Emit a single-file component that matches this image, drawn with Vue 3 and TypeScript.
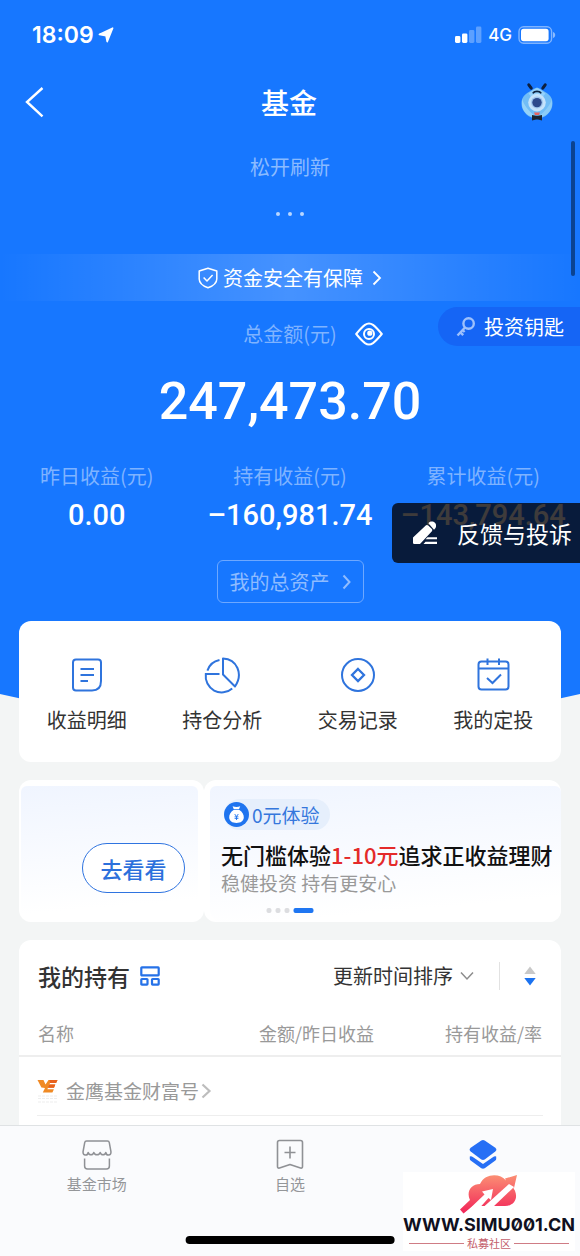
<script setup lang="ts">
import { ref } from 'vue'

interface Stat {
  label: string
  value: string
}

interface Shortcut {
  icon: 'detail' | 'pie' | 'record' | 'plan'
  label: string
}

const stats: Stat[] = [
  { label: '昨日收益(元)', value: '0.00' },
  { label: '持有收益(元)', value: '–160,981.74' },
  { label: '累计收益(元)', value: '–143,794.64' },
]

const shortcuts: Shortcut[] = [
  { icon: 'detail', label: '收益明细' },
  { icon: 'pie', label: '持仓分析' },
  { icon: 'record', label: '交易记录' },
  { icon: 'plan', label: '我的定投' },
]

const sortBy = ref('time')
</script>

<template>
  <div class="page">
    <section class="hero">
      <div class="status">
        <div class="status-left">
          <span class="clock">18:09</span>
          <svg width="16" height="18" viewBox="0 0 16 18"><path d="M14.600 2.200 9.200 15.600 8 9.600 1.400 8.400Z" fill="#fff" stroke="#fff" stroke-width="1.600" stroke-linejoin="round" /></svg>
        </div>
        <div class="status-right">
          <svg width="27" height="18" viewBox="0 0 27 18" fill="#fff">
            <rect x="0" y="10" width="5.4" height="7" rx="1.4" />
            <rect x="7" y="7.4" width="5.4" height="9.6" rx="1.4" />
            <rect x="14" y="4" width="5.4" height="13" rx="1.4" opacity=".3" />
            <rect x="21" y="0.6" width="5.4" height="16.4" rx="1.4" opacity=".3" />
          </svg>
          <span class="network">4G</span>
          <svg width="38" height="18" viewBox="0 0 38 18">
            <rect x="1" y=".8" width="32.6" height="16.4" rx="4.6" fill="none" stroke="#fff" stroke-opacity=".45" stroke-width="1.4" />
            <rect x="3" y="2.8" width="27.6" height="12.4" rx="2.6" fill="#fff" />
            <path d="M35 6v6c1.600-.5 2.200-1.600 2.200-3S36.600 6.500 35 6Z" fill="#fff" opacity=".5" />
          </svg>
        </div>
      </div>

      <header class="nav">
        <button class="icon-button" type="button" aria-label="返回">
          <svg width="20" height="34" viewBox="0 0 20 34" fill="none" stroke="#fff" stroke-width="2.4"><path d="M18.500 3 3 17l15.500 14.400" /></svg>
        </button>
        <h1>基金</h1>
        <button class="icon-button end" type="button" aria-label="客服">
          <svg width="34" height="40" viewBox="0 0 34 40">
            <path d="M17 5.500c3.400 1.200 6.400 3.400 9.800 5.600 3.400 2.200 5.800 5.600 5.700 10.400C32.400 29.500 25.500 36.600 17 36.600S1.500 29.500 1.500 21.500c0-4.800 2.300-8.200 5.700-10.400C10.600 8.900 13.600 6.700 17 5.500Z" fill="#71bdf6" />
            <path d="M17 6c3 1 5.800 3.600 8.500 5.500L17 21 8.500 11.500C11.200 9.600 14 7 17 6Z" fill="#93d1fb" />
            <path d="M2 17c2 6 6 12 15 18.500-8 0-14-5-15-12Z" fill="#a5dbfa" opacity=".7" />
            <path d="M32 17c-2 6-6 12-15 18.500 8 0 14-5 15-12Z" fill="#a5dbfa" opacity=".5" />
            <circle cx="17" cy="20.600" r="8.800" fill="#c5e3fb" />
            <circle cx="17" cy="20.600" r="6" fill="#9fc6ee" />
            <circle cx="17" cy="20.600" r="4.700" fill="#2d4a8c" />
            <path d="M13.300 10.800c1.200-2 6.200-2 7.400 0" fill="none" stroke="#0d2340" stroke-width="1.800" stroke-linecap="round" />
            <path d="M8.800 2.800l2.400 3.400M25.200 2.800l-2.400 3.400" stroke="#0d1f3e" stroke-width="3" stroke-linecap="round" />
            <path d="M14 30.500h6l-1 2.500h-4Z" fill="#e9635f" />
            <path d="M12 33l4 .8h2l4-.8v5.400l-4-1h-2l-4 1Z" fill="#1b2430" />
          </svg>
        </button>
      </header>

      <div class="pull">
        <p>松开刷新</p>
        <div class="pull-dots"><i></i><i></i><i></i></div>
      </div>

      <a class="safety" href="#safety">
        <svg width="20" height="22" viewBox="0 0 20 22" fill="none" stroke="#fff" stroke-width="1.500" stroke-linejoin="round">
          <path d="M10 1.200 18.800 4v8c0 4.600-4.400 7.200-8.800 8.800C5.600 19.200 1.200 16.600 1.200 12V4Z" />
          <path d="m5.600 10.500 3.400 3.500 5.600-6" />
        </svg>
        <span>资金安全有保障</span>
        <svg class="safety-arrow" width="10" height="16" viewBox="0 0 10 16" fill="none" stroke="#fff" stroke-width="1.800"><path d="m1.500 1.500 6.500 6.500-6.500 6.500" /></svg>
      </a>

      <div class="total">
        <div class="total-head">
          <span class="total-label">总金额(元)</span>
          <button class="icon-button" type="button" aria-label="隐藏金额">
            <svg width="28" height="24" viewBox="0 0 28 24" fill="none" stroke="#fff" stroke-width="2" stroke-linejoin="round">
              <path d="M1.200 12C4.500 8 7.500 4.800 10 2.900c2.500-1.800 5.500-1.800 8 0 2.500 1.900 5.500 5.100 8.800 9.100-3.300 4-6.300 7.200-8.800 9.100-2.500 1.800-5.500 1.800-8 0C7.500 19.200 4.500 16 1.200 12Z" />
              <circle cx="14" cy="12" r="5" />
              <circle cx="14.800" cy="11.200" r="1.600" fill="#fff" />
            </svg>
          </button>
        </div>
        <strong class="amount">247,473.70</strong>
        <button class="key-pill" type="button">
          <svg width="20" height="22" viewBox="0 0 20 22" fill="none" stroke="#9dc0fc" stroke-width="2.400">
            <circle cx="12.600" cy="7.500" r="5.200" />
            <path d="m9 11.500-7.500 8M4.200 16.200l3 3M6.600 14l2 2" />
          </svg>
          投资钥匙
        </button>
      </div>

      <div class="stats-area">
        <dl class="stats">
          <div v-for="stat in stats" :key="stat.label">
            <dt>{{ stat.label }}</dt>
            <dd>{{ stat.value }}</dd>
          </div>
        </dl>
        <button class="feedback" type="button">
          <svg width="26" height="28" viewBox="0 0 26 28" fill="#fff">
            <path d="M1 23.800V18.600L14 6.300q1.200-.9 2.300.2l3.600 3.600q1 1.100 0 2.200L8 25H2.200Q1 25 1 23.800Z" />
            <path d="M16.400 4.300c1.600-3 8.400-2.300 7.600 3.200-.2 1.300-1 2.400-2 3.200Z" />
            <path d="M15.500 18.200H25v2h-11.500ZM13.500 22.800H25v2.200H11.500Z" />
          </svg>
          反馈与投诉
        </button>
      </div>

      <button class="assets" type="button">
        我的总资产
        <svg width="9" height="16" viewBox="0 0 9 16" fill="none" stroke="#8fbcff" stroke-width="2"><path d="m1.500 1.500 6 6.500-6 6.500" /></svg>
      </button>
    </section>

    <main class="content">
      <nav class="card shortcuts">
        <a v-for="item in shortcuts" :key="item.label" href="#shortcut">
          <svg width="36" height="38" viewBox="0 0 36 38" fill="none" stroke="#2f74dd" stroke-width="2">
            <template v-if="item.icon === 'detail'">
              <path d="M7 3.500h22q3 0 3 3V25q0 9.500-9 9.500H7q-3 0-3-3v-25q0-3 3-3Z" />
              <path d="M11.500 13h13.500M11.500 19h13.500M11.500 25h7.500" />
            </template>
            <template v-else-if="item.icon === 'pie'">
              <path d="M15.500 4A16 16 0 0 0 3.400 14.600M15.500 18H1.800A16 16.300 0 0 0 28.200 32.400" />
              <path d="M19 2.400V18.500l12 12C39.500 18 33 3 19 2.400Z" stroke-linejoin="round" />
            </template>
            <template v-else-if="item.icon === 'record'">
              <circle cx="18" cy="19" r="16" />
              <path d="m18 13 6 6-6 6-6-6Z" stroke-width="2.300" />
            </template>
            <template v-else>
              <rect x="3.500" y="5.500" width="30" height="28" rx="3" />
              <path d="M3.500 12.600h30M12.500 2.500v6.500M24 2.500v6.500M12 22l5.500 5 8.500-8.500" />
            </template>
          </svg>
          <span>{{ item.label }}</span>
        </a>
      </nav>

      <section class="carousel">
        <article class="slide slide-tail">
          <div class="slide-body">
            <button class="go" type="button">去看看</button>
          </div>
        </article>
        <article class="slide slide-main">
          <div class="slide-body">
            <span class="tag">
              <svg width="25" height="25" viewBox="0 0 25 25">
                <circle cx="12.500" cy="12.500" r="12.500" fill="#1f74ef" />
                <path d="M8.600 4.300q4 1.300 7.600 0l-1.200 3h-5.200Z" fill="#fff" />
                <path d="M9.600 8h5.800c3 2 4.600 4.600 4.400 7.600-.2 3.600-3 5.400-7.300 5.400s-7.100-1.800-7.300-5.400C5 12.600 6.600 10 9.600 8Z" fill="#fff" />
                <path d="m10.700 12 1.800 2.600 1.800-2.600M12.500 14.500v3.500M10.600 14.800h3.800M10.600 16.400h3.800" fill="none" stroke="#1f74ef" stroke-width=".9" />
              </svg>
              0元体验
            </span>
            <h2>无门槛体验<em>1-10元</em>追求正收益理财</h2>
            <p>稳健投资 持有更安心</p>
          </div>
        </article>
        <div class="pager"><i></i><i></i><i></i><i class="on"></i></div>
      </section>

      <section class="card holdings">
        <header class="holdings-head">
          <h2>我的持有</h2>
          <button class="icon-button" type="button" aria-label="切换视图">
            <svg width="20" height="20" viewBox="0 0 20 20" fill="none" stroke="#2672e8" stroke-width="2.200">
              <rect x="1.300" y="1.300" width="17.400" height="8" rx=".6" />
              <rect x="1.300" y="13" width="6.200" height="5.700" rx=".6" />
              <rect x="12" y="13" width="6.700" height="5.700" rx=".6" />
            </svg>
          </button>
          <label class="sort">
            <select v-model="sortBy" aria-label="排序方式">
              <option value="time">更新时间排序</option>
            </select>
            <svg width="14" height="10" viewBox="0 0 14 10" fill="none" stroke="#8c8c8c" stroke-width="1.500"><path d="m1 1.500 6 6.500 6-6.500" /></svg>
          </label>
          <button class="order" type="button" aria-label="切换升降序">
            <svg width="12" height="20" viewBox="0 0 12 20"><path d="M6 .5 11.700 8H.3Z" fill="#c8c8c8" /><path d="M6 19.500 11.700 12H.3Z" fill="#1b72f0" /></svg>
          </button>
        </header>
        <table>
          <thead>
            <tr>
              <th scope="col">名称</th>
              <th scope="col">金额/昨日收益</th>
              <th scope="col">持有收益/率</th>
            </tr>
          </thead>
          <tbody>
            <tr>
              <td colspan="3">
                <a class="fund" href="#fund">
                  <svg width="22" height="24" viewBox="0 0 22 24">
                    <path d="M.5 1h6l2 4.500L11.500 1h9l-1.400 3h-6l-.8 1.500h6L17 8.800h-6l-.6 1.400h6.500L15.400 13.500H5.800L8 9 4.400 8.400Z" fill="#f08a24" />
                    <path d="M12.500 1h8l-1.400 3h-6ZM12.300 5.500h6L17 8.800h-6Z" fill="#e8611c" />
                    <path d="M1 17h20M1 19.500h20M1 23h20" stroke="#ededed" stroke-dasharray="3 1" />
                  </svg>
                  <span>金鹰基金财富号</span>
                  <svg width="11" height="16" viewBox="0 0 11 16" fill="none" stroke="#bdbdbd" stroke-width="2.200"><path d="m1.500 1.500 7 6.500-7 6.500" /></svg>
                </a>
              </td>
            </tr>
          </tbody>
        </table>
      </section>
    </main>

    <footer class="tabbar">
      <nav class="tabs">
        <a href="#market">
          <svg width="30" height="32" viewBox="0 0 30 32" fill="none" stroke="#8f9195" stroke-width="1.500" stroke-linejoin="round">
            <path d="M4.500 2h21q1.500 0 1.800 1.600L29 13c0 4-4.600 4-5.200.5-.8 3-4.800 3-5.600 0-.8 3-5.600 3-6.400 0-.8 3-4.800 3-5.600 0C5.600 17 1 17 1 13l1.700-9.400Q3 2 4.500 2Z" />
            <path d="M2.600 19.500V27q0 3 3 3h18.800q3 0 3-3v-7.500" />
          </svg>
          <span>基金市场</span>
        </a>
        <a href="#watch">
          <svg width="30" height="32" viewBox="0 0 30 32" fill="none" stroke="#8f9195" stroke-width="1.600" stroke-linejoin="round">
            <path d="M4.500 1.500h21q2 0 2 2v24q0 2-2 1.500L15 25.500 4.500 29q-2 .5-2-1.500v-24q0-2 2-2Z" />
            <path d="M15 7.500v12M9.500 13.500h11" />
          </svg>
          <span>自选</span>
        </a>
        <a href="#mine" aria-label="我的持有">
          <svg width="30" height="32" viewBox="0 0 30 32" fill="#266ff5">
            <path d="M13.300 1.400q1.700-.9 3.400 0l10.600 7.400q2.200 1.900 0 3.800L16.700 20.500q-1.700.9-3.400 0L2.700 12.600q-2.200-1.900 0-3.800Z" />
            <path d="M1.800 17.500q1.600-.6 3 .5L15 25l10.200-7q1.400-1.100 3-.5v2.400q0 1-1.200 1.900l-10.300 7.500q-1.700.9-3.400 0L3 21.800q-1.200-.9-1.200-1.900Z" />
          </svg>
        </a>
      </nav>
      <div class="home-indicator"></div>
      <aside class="watermark">
        <svg width="58" height="40" viewBox="0 0 58 40">
          <defs>
            <linearGradient id="cloud" gradientUnits="userSpaceOnUse" x1="0" y1="0" x2="0" y2="38"><stop offset="0" stop-color="#fb8f74" /><stop offset="1" stop-color="#f22558" /></linearGradient>
          </defs>
          <path d="M10 25C6 17 11 9 20 9 25-2 40-2 46 5.500L45 3.500 57 0 54 13 51.500 10.500C60 20 56 31 45 31H13L3.500 38.500 0 34.500Z" fill="url(#cloud)" />
          <path d="M3.500 39.500 24.500 19.500 22 16.500 33 14 31 25 28.500 23 20 32.500 4 40Z" fill="#fff" />
          <path d="M23.500 32 49 9 54 12 33 32Z" fill="#fff" />
        </svg>
        <b>WWW.SIMU001.CN</b>
        <span class="community">私募社区</span>
      </aside>
    </footer>
    <div class="scroll-thumb"></div>
  </div>
</template>

<style>
body {
  margin: 0;
  background: #f3f5f5;
}
</style>

<style scoped>
.page {
  position: relative;
  display: flex;
  flex-direction: column;
  min-height: 100vh;
  background: #f3f5f5;
  color: #333;
  font-family: "Noto Sans CJK SC", sans-serif;
  font-size: 20px;
  line-height: 28px;
}
h1, h2, p, dl, dd { margin: 0; }
svg { display: block; flex: none; }
a { color: inherit; text-decoration: none; }
button, select {
  margin: 0;
  padding: 0;
  border: 0;
  background: none;
  color: inherit;
  font: inherit;
  line-height: inherit;
}

.hero {
  display: flex;
  flex-direction: column;
  padding-bottom: 155px;
  background: #1777ff;
  color: #fff;
  clip-path: polygon(0 0, 100% 0, 100% calc(100% - 64px), 50% 100%, 0 calc(100% - 64px));
}
.status {
  display: flex;
  align-items: center;
  justify-content: space-between;
  height: 70px;
  padding: 0 24px 0 32px;
  font-family: Inter, sans-serif;
}
.status-left, .status-right { display: flex; align-items: center; gap: 6px; }
.status-left { gap: 4px; }
.clock { font-size: 23px; font-weight: 600; }
.network { font-size: 17px; font-weight: 500; }

.nav {
  display: grid;
  grid-template-columns: 1fr auto 1fr;
  align-items: center;
  height: 64px;
  padding: 0 26px 0 24px;
}
.nav h1 { font-size: 28px; font-weight: 500; line-height: 40px; }
.icon-button { display: inline-flex; justify-self: start; }
.icon-button.end { justify-self: end; }

.pull {
  display: flex;
  flex-direction: column;
  align-items: center;
  gap: 31px;
  padding: 19px 0 38px;
  color: #8bbbff;
}
.pull-dots { display: flex; gap: 8px; }
.pull-dots i { width: 4px; height: 4px; border-radius: 50%; background: #b9d6ff; }

.safety {
  display: flex;
  align-items: center;
  justify-content: center;
  gap: 5px;
  height: 47px;
  background: linear-gradient(90deg, rgba(255, 255, 255, 0), rgba(255, 255, 255, 0.2) 50%, rgba(255, 255, 255, 0));
}
.safety-arrow { margin-left: 4px; }

.total {
  position: relative;
  display: flex;
  flex-direction: column;
  gap: 23px;
  padding-top: 18px;
}
.total-head {
  display: grid;
  grid-template-columns: 1fr auto 1fr;
  align-items: center;
  column-gap: 18px;
  height: 30px;
}
.total-label { grid-column: 2; color: #7fb3ff; }
.amount {
  font-family: Roboto, sans-serif;
  font-size: 52px;
  font-weight: 500;
  line-height: 60px;
  text-align: center;
}
.key-pill {
  position: absolute;
  top: 6px;
  right: 0;
  display: flex;
  align-items: center;
  gap: 8px;
  height: 39px;
  padding: 0 16px 0 18px;
  border-radius: 20px 0 0 20px;
  background: #1565f5;
}

.stats-area { position: relative; padding-top: 30px; }
.stats { display: grid; grid-template-columns: repeat(3, 1fr); text-align: center; }
.stats dt { color: #7fb3ff; }
.stats dd {
  margin-top: 7px;
  font-family: Roboto, sans-serif;
  font-size: 29px;
  font-weight: 500;
  line-height: 36px;
}
.feedback {
  position: absolute;
  right: 0;
  bottom: -30px;
  display: flex;
  align-items: center;
  gap: 19px;
  height: 60px;
  padding: 0 8px 0 20px;
  border-radius: 6px 0 0 6px;
  background: rgba(4, 0, 0, 0.77);
  font-size: 23px;
}
.assets {
  display: flex;
  align-items: center;
  align-self: center;
  gap: 12px;
  height: 43px;
  margin-top: 27px;
  padding: 0 12px;
  border: 1px solid #6ea8ff;
  border-radius: 6px;
  color: #8fbcff;
}

.content {
  position: relative;
  display: flex;
  flex: 1;
  flex-direction: column;
  gap: 18px;
  margin-top: -137px;
  padding: 0 19px;
}
.card { border-radius: 12px; background: #fff; }
.shortcuts {
  display: grid;
  grid-template-columns: repeat(4, 1fr);
  padding: 35px 0 28px;
}
.shortcuts a {
  display: flex;
  flex-direction: column;
  align-items: center;
  gap: 12px;
}

.carousel { position: relative; display: flex; height: 142px; }
.slide {
  box-sizing: border-box;
  padding-top: 6px;
  border-radius: 12px;
  background: #fff;
}
.slide-tail { width: 185px; padding-right: 6px; padding-left: 2px; }
.slide-main { flex: 1; padding-left: 6px; }
.slide-body {
  box-sizing: border-box;
  height: 100%;
  border-radius: 6px 6px 12px 12px;
  background: linear-gradient(175deg, #f0f5ff, #fff 85%);
}
.slide-tail .slide-body { display: flex; justify-content: flex-end; padding: 57px 13px 0 0; }
.slide-main .slide-body { padding: 13px 0 0 11px; }
.go {
  box-sizing: border-box;
  width: 103px;
  height: 50px;
  border: 1px solid #2f74e0;
  border-radius: 25px;
  background: #fff;
  color: #2c70dc;
  font-size: 22px;
  font-weight: 500;
}
.tag {
  display: inline-flex;
  align-items: center;
  gap: 3px;
  height: 31px;
  margin-left: 3px;
  padding-right: 10px;
  border-radius: 16px;
  background: #e6effc;
  color: #3577dc;
  font-size: 19px;
}
.slide-main h2 {
  margin-top: 6px;
  color: #111;
  font-size: 22px;
  font-weight: 500;
  line-height: 30px;
  white-space: nowrap;
}
.slide-main em { color: #e42a2a; font-style: normal; }
.slide-main p { color: #999; font-size: 19px; }
.pager {
  position: absolute;
  bottom: 9px;
  left: 50%;
  display: flex;
  gap: 4px;
  transform: translateX(-50%);
}
.pager i { width: 5px; height: 5px; border-radius: 2px; background: #dcdde0; }
.pager .on { width: 20px; background: #1f76f2; }

.holdings { flex: 1; padding-top: 22px; border-radius: 12px 12px 0 0; }
.holdings-head { display: flex; align-items: center; height: 28px; padding: 0 25px 0 19px; }
.holdings-head h2 { margin-right: 10px; font-size: 23px; font-weight: 500; }
.sort { display: flex; align-items: center; gap: 7px; margin-left: auto; }
.sort select { appearance: none; }
.order { display: flex; margin-left: 25px; padding: 4px 0 4px 24px; border-left: 1px solid #e2e2e2; }
table { width: 100%; margin-top: 21px; border-collapse: collapse; table-layout: fixed; }
th {
  padding: 8px 0;
  border-bottom: 2px solid #eee;
  color: #999;
  font-size: 18px;
  font-weight: 400;
  text-align: right;
}
th:first-child { width: 30%; padding-left: 19px; text-align: left; }
th:last-child { width: 31%; padding-right: 19px; }
td { padding: 0 18px; }
.fund {
  display: flex;
  align-items: center;
  padding: 20px 0 10px;
  border-bottom: 1px solid #eee;
  color: #999;
  font-size: 19px;
}
.fund span { margin: 0 2px 0 7px; }

.tabbar {
  position: sticky;
  bottom: 0;
  box-sizing: border-box;
  height: 131px;
  border-top: 1px solid #dfe2e4;
  background: #fafbfd;
}
.tabs { display: grid; grid-template-columns: repeat(3, 1fr); padding-top: 13px; }
.tabs a {
  display: flex;
  flex-direction: column;
  align-items: center;
  gap: 3px;
  color: #949699;
  font-size: 15px;
  line-height: 20px;
}
.home-indicator {
  position: absolute;
  bottom: 12px;
  left: 50%;
  width: 36%;
  height: 8px;
  border-radius: 4px;
  background: #000;
  transform: translateX(-50%);
}
.watermark {
  position: absolute;
  right: 5px;
  bottom: 5px;
  display: flex;
  flex-direction: column;
  align-items: center;
  width: 172px;
  padding-top: 3px;
  background: #fff;
}
.watermark b {
  color: #101020;
  font-family: Inter, sans-serif;
  font-feature-settings: "zero";
  font-size: 18px;
  font-weight: 700;
  line-height: 20px;
}
.community {
  display: flex;
  align-items: center;
  gap: 3px;
  align-self: stretch;
  padding: 0 6px;
  color: #c4606c;
  font-size: 11px;
  line-height: 16px;
}
.community::before, .community::after {
  flex: 1;
  height: 1px;
  background: #cf7c85;
  content: "";
}
.scroll-thumb {
  position: absolute;
  top: 141px;
  right: 5px;
  width: 4px;
  height: 135px;
  border-radius: 2px;
  background: #0b4391;
}
</style>
